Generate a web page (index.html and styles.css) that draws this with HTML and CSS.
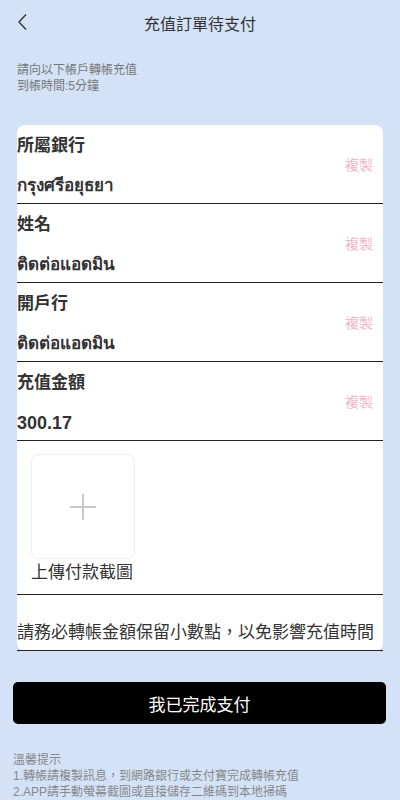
FILE: index.html
```html
<!DOCTYPE html>
<html lang="zh-TW">
<head>
    <meta charset="UTF-8">
    <meta name="viewport" content="width=device-width, initial-scale=1.0">
    <title>充值訂單待支付</title>
    <link rel="stylesheet" href="styles.css">
</head>
<body>
    <div class="page">
        <div class="header">
            <span class="back">
                <svg width="12" height="18" viewBox="0 0 12 18"><path d="M9 1.5 L2 9 L9 16.5" fill="none" stroke="#333" stroke-width="1.4"/></svg>
            </span>
            <h1>充值訂單待支付</h1>
        </div>

        <div class="notice">
            <p>請向以下帳戶轉帳充值</p>
            <p>到帳時間:5分鐘</p>
        </div>

        <div class="card">
            <div class="row">
                <div class="info">
                    <div class="label">所屬銀行</div>
                    <div class="value">กรุงศรีอยุธยา</div>
                </div>
                <span class="copy">複製</span>
            </div>
            <div class="row">
                <div class="info">
                    <div class="label">姓名</div>
                    <div class="value">ติดต่อแอดมิน</div>
                </div>
                <span class="copy">複製</span>
            </div>
            <div class="row">
                <div class="info">
                    <div class="label">開戶行</div>
                    <div class="value">ติดต่อแอดมิน</div>
                </div>
                <span class="copy">複製</span>
            </div>
            <div class="row">
                <div class="info">
                    <div class="label">充值金額</div>
                    <div class="value amount">300.17</div>
                </div>
                <span class="copy">複製</span>
            </div>

            <div class="upload">
                <div class="upload-box">
                    <svg width="28" height="28" viewBox="0 0 28 28"><path d="M14 1 V27 M1 14 H27" stroke="#c8c8c8" stroke-width="2"/></svg>
                </div>
                <div class="upload-text">上傳付款截圖</div>
            </div>

            <div class="remark">請務必轉帳金額保留小數點，以免影響充值時間</div>
        </div>

        <button class="pay-btn">我已完成支付</button>

        <div class="tips">
            <p>溫馨提示</p>
            <p>1.轉帳請複製訊息，到網路銀行或支付寶完成轉帳充值</p>
            <p>2.APP請手動螢幕截圖或直接儲存二維碼到本地掃碼</p>
        </div>
    </div>
</body>
</html>
```

FILE: styles.css
```css
body {
    margin: 0;
    background-color: #d4e2f8;
    font-family: "Liberation Sans", "Noto Sans CJK TC", "Noto Sans", sans-serif;
    color: #333;
}
p {
    margin: 0;
}
.page {
    width: 400px;
    height: 800px;
    overflow: hidden;
}
.header {
    height: 46px;
    display: flex;
    align-items: center;
    justify-content: center;
    position: relative;
}
.back {
    position: absolute;
    left: 17px;
    top: 13px;
}
.header h1 {
    margin: 0;
    font-size: 16px;
    font-weight: normal;
    color: #333;
}
.notice {
    padding: 16px 17px 0;
    font-size: 12px;
    line-height: 16px;
    color: #777;
}
.card {
    margin: 31px 17px 0;
    background-color: #fff;
    border-radius: 8px;
}
.row {
    display: flex;
    align-items: center;
    height: 78px;
    border-bottom: 1px solid #222;
    padding-right: 10px;
}
.info {
    flex: 1;
    padding-top: 4px;
}
.label {
    font-size: 17px;
    font-weight: bold;
    line-height: 22px;
    color: #333;
}
.value {
    margin-top: 18px;
    font-size: 17px;
    font-weight: bold;
    line-height: 22px;
    color: #333;
}
.amount {
    font-size: 18px;
}
.copy {
    font-size: 14px;
    color: #f0b6c7;
}
.upload {
    padding: 13px 0 10px 14px;
    border-bottom: 1px solid #222;
}
.upload-box {
    width: 104px;
    height: 105px;
    border: 1px solid #eee;
    border-radius: 8px;
    box-sizing: border-box;
    display: flex;
    align-items: center;
    justify-content: center;
}
.upload-text {
    margin-top: 3px;
    font-size: 17px;
    line-height: 22px;
    color: #333;
}
.remark {
    padding: 27px 0 6px;
    font-size: 17px;
    line-height: 22px;
    color: #333;
    border-bottom: 1px solid #222;
    white-space: nowrap;
}
.pay-btn {
    display: block;
    width: 373px;
    height: 42px;
    margin: 31px 0 0 13px;
    background-color: #000;
    color: #fff;
    border: none;
    border-radius: 5px;
    font-family: inherit;
    font-size: 17px;
}
.tips {
    padding: 28px 13px 0;
    font-size: 12px;
    line-height: 16px;
    color: #888;
}
```
